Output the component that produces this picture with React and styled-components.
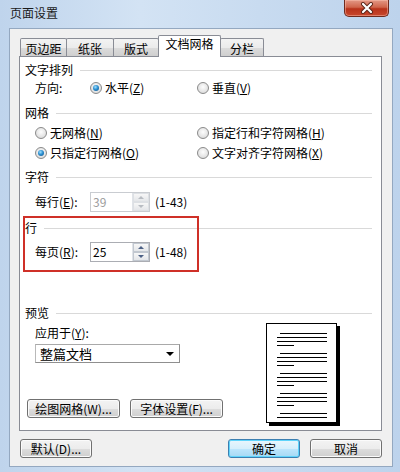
import React from 'react';
import styled, { createGlobalStyle, css } from 'styled-components';

const GlobalStyle = createGlobalStyle`
  body {
    margin: 0;
    font-family: "Noto Sans CJK SC", "Liberation Sans", sans-serif;
    font-size: 12px;
    color: #000;
  }
`;

const Window = styled.div`
  width: 400px;
  height: 472px;
  display: flex;
  flex-direction: column;
  overflow: hidden;
  background: linear-gradient(to right, #bfd4ec 0%, #d3e3f4 35%, #c8dbf0 65%, #bdd3ec 100%);
`;

const TitleBar = styled.div`
  height: 28px;
  flex: none;
  display: flex;
  justify-content: space-between;
  align-items: flex-start;
  padding: 0 11px 0 10px;
`;

const Title = styled.div`
  margin-top: 5px;
  font-size: 12px;
  line-height: 16px;
  color: #1a1a1a;
`;

const CloseButton = styled.div`
  width: 45px;
  height: 17px;
  box-sizing: border-box;
  display: flex;
  align-items: center;
  justify-content: center;
  border: 1px solid #6e2a1e;
  border-top: none;
  border-radius: 0 0 5px 5px;
  background: linear-gradient(#e39886 0%, #d0654c 45%, #b8321a 55%, #c8472c 100%);
  box-shadow: inset 0 0 0 1px rgba(255, 200, 185, 0.45);
`;

const Body = styled.div`
  flex: 1;
  margin: 0 7px 5px 9px;
  box-sizing: border-box;
  border: 1px solid #94a8c0;
  background: #f0f0f0;
  padding: 6px 10px 0 9px;
`;

const TabStrip = styled.div`
  height: 21px;
  display: flex;
  align-items: flex-end;
  padding-left: 1px;
`;

const Tab = styled.div`
  box-sizing: border-box;
  width: ${(p) => p.$w}px;
  height: 18px;
  margin-right: -1px;
  padding-top: 2px;
  text-align: center;
  line-height: 16px;
  border: 1px solid #898c95;
  border-bottom: none;
  border-radius: 2px 2px 0 0;
  background: linear-gradient(#f3f3f3 0%, #ebebeb 50%, #dcdcdc 51%, #cfcfcf 100%);

  ${(p) =>
    p.$active &&
    css`
      position: relative;
      z-index: 1;
      height: 22px;
      margin-bottom: -1px;
      padding-top: 0;
      background: #fff;
    `}
`;

const Panel = styled.div`
  box-sizing: border-box;
  height: 375px;
  border: 1px solid #898c95;
  background: #fff;
  padding-top: 5px;
`;

const SectionHeader = styled.div`
  display: flex;
  align-items: center;
  gap: 7px;
  height: 16px;
  line-height: 16px;
  margin: ${(p) => p.$mt || 0}px 9px 0 5px;

  &::after {
    content: '';
    flex: 1;
    border-top: 1px solid #d9d9d9;
  }
`;

const Key = styled.u`
  text-decoration: underline;
`;

const DirectionRow = styled.div`
  display: grid;
  grid-template-columns: 55px 107px auto;
  align-items: center;
  height: 16px;
  margin: 2px 0 0 15px;
`;

const OptionGrid = styled.div`
  display: grid;
  grid-template-columns: 162px auto;
  grid-auto-rows: 16px;
  row-gap: 4px;
  margin: 4px 0 0 15px;
`;

const RadioLabel = styled.label`
  display: flex;
  align-items: center;
  gap: 3px;
  line-height: 16px;
  white-space: nowrap;
`;

const RadioDot = styled.span`
  box-sizing: border-box;
  width: 12px;
  height: 12px;
  border-radius: 50%;
  border: 1px solid #8a8a8a;
  background: radial-gradient(circle at 50% 40%, #fdfdfd 0%, #e4e4e4 60%, #d2d2d2 100%);
  display: flex;
  align-items: center;
  justify-content: center;

  ${(p) =>
    p.$checked &&
    css`
      &::after {
        content: '';
        width: 6px;
        height: 6px;
        border-radius: 50%;
        background: radial-gradient(circle at 40% 35%, #9fe0ff 0%, #2c8fd0 45%, #0d4f86 100%);
      }
    `}
`;

const SpinRow = styled.div`
  display: flex;
  align-items: center;
  height: 20px;
  margin: ${(p) => p.$mt}px 0 0 15px;
`;

const FieldLabel = styled.span`
  width: 55px;
  line-height: 16px;
  white-space: nowrap;
`;

const SpinBox = styled.div`
  box-sizing: border-box;
  width: 60px;
  height: 20px;
  display: flex;
  border: 1px solid ${(p) => (p.$disabled ? '#c9ccd1' : '#abadb3')};
  background: #fff;
`;

const SpinValue = styled.span`
  flex: 1;
  padding-left: 2px;
  line-height: 18px;
  color: ${(p) => (p.$disabled ? '#9c9c9c' : '#000')};
`;

const SpinButtons = styled.div`
  width: 16px;
  display: flex;
  flex-direction: column;
  border-left: 1px solid #e0e3e8;
`;

const SpinHalf = styled.div`
  flex: 1;
  display: flex;
  align-items: center;
  justify-content: center;
  border: 1px solid ${(p) => (p.$disabled ? '#dde0e4' : '#c2c8d0')};
  background: linear-gradient(#f7f7f7, #e4e6e9);

  &::after {
    content: '';
    border-left: 3px solid transparent;
    border-right: 3px solid transparent;
    ${(p) => (p.$down ? 'border-top' : 'border-bottom')}: 3px solid
      ${(p) => (p.$disabled ? '#b8bcc2' : '#4d6185')};
  }
`;

const Range = styled.span`
  margin-left: 5px;
  line-height: 16px;
`;

const Highlighted = styled.div`
  position: relative;
  margin-top: 8px;
`;

// annotation frame drawn over the "行" group
const RedBox = styled.div`
  position: absolute;
  top: -4px;
  left: 3px;
  width: 176px;
  height: 56px;
  box-sizing: border-box;
  border: 2px solid #cf3028;
  pointer-events: none;
`;

const PreviewArea = styled.div`
  display: flex;
  padding-left: 7px;
`;

const PreviewLeft = styled.div`
  width: 239px;
  display: flex;
  flex-direction: column;
`;

const ApplyLabel = styled.div`
  margin: 4px 0 0 8px;
  line-height: 16px;
`;

const Select = styled.div`
  box-sizing: border-box;
  width: 145px;
  height: 19px;
  margin: 3px 0 0 8px;
  display: flex;
  align-items: center;
  justify-content: space-between;
  padding: 0 5px 0 4px;
  border: 1px solid #8f8f8f;
  border-top-color: #a9a9a9;
  border-left-color: #b9b9b9;
  background: #fff;
  font-size: 13px;

  &::after {
    content: '';
    border-left: 4px solid transparent;
    border-right: 4px solid transparent;
    border-top: 4px solid #000;
  }
`;

const ButtonRow = styled.div`
  display: flex;
  gap: 10px;
  margin-top: 36px;
`;

const Button = styled.button`
  box-sizing: border-box;
  width: ${(p) => p.$w}px;
  height: 19px;
  padding: 0;
  font-family: inherit;
  font-size: 12px;
  line-height: 17px;
  color: #000;
  white-space: nowrap;
  border: 1px solid #707070;
  border-radius: 3px;
  background: linear-gradient(#f3f3f3 0%, #ececec 50%, #dddddd 51%, #cfcfcf 100%);
  box-shadow: inset 0 0 0 1px #fbfbfb;

  ${(p) =>
    p.$primary &&
    css`
      border-color: #3c7fb1;
      background: linear-gradient(#e9f6fd 0%, #d6effc 50%, #bde6fd 51%, #a6d9f4 100%);
      box-shadow: inset 0 0 0 1px #5fd4fb;
    `}
`;

const Page = styled.div`
  box-sizing: border-box;
  width: 71px;
  height: 100px;
  margin-top: 2px;
  border: 1px solid #000;
  background: #fff;
  box-shadow: 3px 3px 0 #000;

  svg {
    display: block;
  }
`;

const Footer = styled.div`
  display: flex;
  gap: 10px;
  margin: 8px 0 0 1px;
`;

const Spacer = styled.div`
  flex: 1;
`;

const tabs = [
  { label: '页边距', w: 47 },
  { label: '纸张', w: 48 },
  { label: '版式', w: 46 },
  { label: '文档网格', w: 63, active: true },
  { label: '分栏', w: 44 },
];

function Radio({ checked, children }) {
  return (
    <RadioLabel>
      <RadioDot $checked={checked} />
      <span>{children}</span>
    </RadioLabel>
  );
}

function Spin({ value, disabled }) {
  return (
    <SpinBox $disabled={disabled}>
      <SpinValue $disabled={disabled}>{value}</SpinValue>
      <SpinButtons>
        <SpinHalf $disabled={disabled} />
        <SpinHalf $disabled={disabled} $down />
      </SpinButtons>
    </SpinBox>
  );
}

// line groups drawn on the preview page: [y, x1, x2]
const pageLines = [];
[9, 29, 49, 69].forEach((y) => {
  pageLines.push([y, 13, 60], [y + 4, 10, 60], [y + 8, 10, 60], [y + 12, 10, 27]);
});
pageLines.push([89, 13, 60], [93, 10, 60]);

function PagePreview() {
  return (
    <Page>
      <svg width="69" height="98" viewBox="0 0 69 98">
        {pageLines.map(([y, x1, x2], i) => (
          <rect key={i} x={x1} y={y} width={x2 - x1} height="1" fill="#000" />
        ))}
      </svg>
    </Page>
  );
}

export default function App() {
  return (
    <>
      <GlobalStyle />
      <Window>
        <TitleBar>
          <Title>页面设置</Title>
          <CloseButton>
            <svg width="14" height="12" viewBox="0 0 14 12">
              <path d="M3 2 L11 10 M11 2 L3 10" stroke="#5a2418" strokeWidth="4" strokeLinecap="round" />
              <path d="M3 2 L11 10 M11 2 L3 10" stroke="#fff" strokeWidth="2.2" strokeLinecap="round" />
            </svg>
          </CloseButton>
        </TitleBar>
        <Body>
          <TabStrip>
            {tabs.map((t) => (
              <Tab key={t.label} $w={t.w} $active={t.active}>
                {t.label}
              </Tab>
            ))}
          </TabStrip>
          <Panel>
            <SectionHeader>文字排列</SectionHeader>
            <DirectionRow>
              <FieldLabel>方向:</FieldLabel>
              <Radio checked>
                水平(<Key>Z</Key>)
              </Radio>
              <Radio>
                垂直(<Key>V</Key>)
              </Radio>
            </DirectionRow>

            <SectionHeader $mt={9}>网格</SectionHeader>
            <OptionGrid>
              <Radio>
                无网格(<Key>N</Key>)
              </Radio>
              <Radio>
                指定行和字符网格(<Key>H</Key>)
              </Radio>
              <Radio checked>
                只指定行网格(<Key>O</Key>)
              </Radio>
              <Radio>
                文字对齐字符网格(<Key>X</Key>)
              </Radio>
            </OptionGrid>

            <SectionHeader $mt={8}>字符</SectionHeader>
            <SpinRow $mt={7}>
              <FieldLabel>
                每行(<Key>E</Key>):
              </FieldLabel>
              <Spin value="39" disabled />
              <Range>(1-43)</Range>
            </SpinRow>

            <Highlighted>
              <SectionHeader>行</SectionHeader>
              <SpinRow $mt={6}>
                <FieldLabel>
                  每页(<Key>R</Key>):
                </FieldLabel>
                <Spin value="25" />
                <Range>(1-48)</Range>
              </SpinRow>
              <RedBox />
            </Highlighted>

            <SectionHeader $mt={43}>预览</SectionHeader>
            <PreviewArea>
              <PreviewLeft>
                <ApplyLabel>
                  应用于(<Key>Y</Key>):
                </ApplyLabel>
                <Select>整篇文档</Select>
                <ButtonRow>
                  <Button $w={93}>绘图网格(W)...</Button>
                  <Button $w={93}>字体设置(F)...</Button>
                </ButtonRow>
              </PreviewLeft>
              <PagePreview />
            </PreviewArea>
          </Panel>
          <Footer>
            <Button $w={72}>默认(D)...</Button>
            <Spacer />
            <Button $w={72} $primary>
              确定
            </Button>
            <Button $w={72}>取消</Button>
          </Footer>
        </Body>
      </Window>
    </>
  );
}
